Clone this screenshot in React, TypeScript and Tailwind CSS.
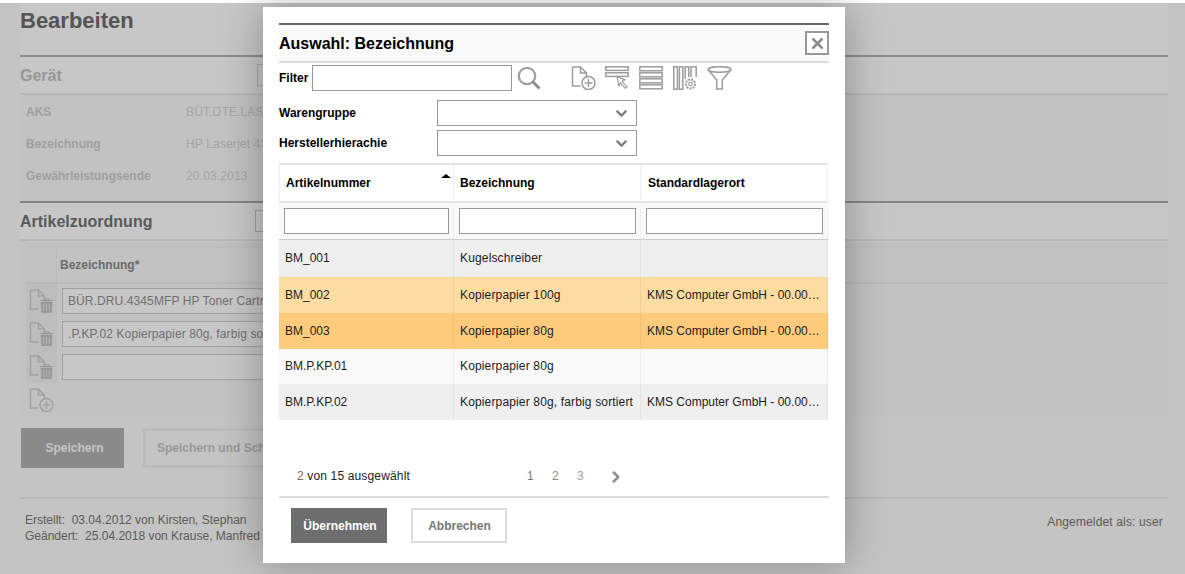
import { ChevronDown, ChevronRight, X } from 'lucide-react';

const ROWS = [
  { nr: 'BM_001', name: 'Kugelschreiber', ort: '', bg: 'bg-[#efefef]', h: 'h-[37px]' },
  { nr: 'BM_002', name: 'Kopierpapier 100g', ort: 'KMS Computer GmbH - 00.00.00.00', bg: 'bg-[#fddca2]', h: 'h-[36px]' },
  { nr: 'BM_003', name: 'Kopierpapier 80g', ort: 'KMS Computer GmbH - 00.00.00.00', bg: 'bg-[#fecb7c]', h: 'h-[36px]' },
  { nr: 'BM.P.KP.01', name: 'Kopierpapier 80g', ort: '', bg: 'bg-[#f9f9f9]', h: 'h-[35px]' },
  { nr: 'BM.P.KP.02', name: 'Kopierpapier 80g, farbig sortiert', ort: 'KMS Computer GmbH - 00.00.00.00', bg: 'bg-[#efefef]', h: 'h-[36px]' },
];

const FONT = 'font-["Liberation_Sans",Arial,sans-serif]';

function FileIcon({ color, children }: { color: string; children?: React.ReactNode }) {
  return (
    <svg width="25" height="24" viewBox="0 0 25 24" fill="none" stroke={color} strokeWidth="1.5">
      <path d="M1.5 1h8l6 6v5M1.5 1v19h8M9.5 1v6h6" />
      {children}
    </svg>
  );
}

function TrashIcon() {
  return (
    <FileIcon color="#d0d0d0">
      <path d="M11 11.5h13M15 11.5v-1.5h5v1.5" stroke="#c4c4c4" strokeWidth="1.2" />
      <path d="M12 13h11l-.7 10.5h-9.6z" fill="#c4c4c4" stroke="#c4c4c4" strokeWidth="0.8" />
      <path d="M14.7 15v7M17.5 15v7M20.3 15v7" stroke="#e8e8e8" strokeWidth="1" />
    </FileIcon>
  );
}

function AddFileIcon({ color }: { color: string }) {
  return (
    <FileIcon color={color}>
      <circle cx="17.5" cy="17" r="6.5" />
      <path d="M17.5 13v8M13.5 17h8" />
    </FileIcon>
  );
}

function SearchIcon() {
  return (
    <svg width="24" height="24" viewBox="0 0 24 24" fill="none">
      <circle cx="10" cy="10" r="8.2" stroke="#a0a0a0" strokeWidth="2.2" />
      <path d="M15.5 15.5l7 7" stroke="#8e8e8e" strokeWidth="3" />
    </svg>
  );
}

function RowSelectIcon() {
  return (
    <svg width="24" height="24" viewBox="0 0 24 24" fill="none" stroke="#9c9c9c" strokeWidth="1.5">
      <rect x="0.8" y="0.8" width="22.4" height="3.6" />
      <rect x="0.8" y="6.8" width="22.4" height="3.6" />
      <path d="M12 10.5l8 3.4-3 1.4 5 5.4-1.6 1.6-5-5.4-1.4 3z" fill="white" strokeWidth="1.2" />
    </svg>
  );
}

function RowsIcon() {
  return (
    <svg width="24" height="24" viewBox="0 0 24 24" fill="none" stroke="#9c9c9c" strokeWidth="1.5">
      <rect x="0.8" y="0.8" width="22.4" height="4" />
      <rect x="0.8" y="6.8" width="22.4" height="4" />
      <rect x="0.8" y="12.8" width="22.4" height="4" />
      <rect x="0.8" y="18.8" width="22.4" height="4" />
    </svg>
  );
}

function ColumnsIcon() {
  return (
    <svg width="24" height="24" viewBox="0 0 24 24" fill="none" stroke="#9c9c9c" strokeWidth="1.5">
      <rect x="0.8" y="0.8" width="3.6" height="22.4" />
      <rect x="6.4" y="0.8" width="3.4" height="22.4" />
      <path d="M12.2 13V0.8h3.6V11M18 11V0.8h5.2V11" />
      <circle cx="17.5" cy="18" r="4.6" strokeWidth="2" strokeDasharray="2 1.1" />
      <circle cx="17.5" cy="18" r="1.8" strokeWidth="1.2" />
    </svg>
  );
}

function FunnelIcon() {
  return (
    <svg width="25" height="24" viewBox="0 0 25 24" fill="none" stroke="#9c9c9c" strokeWidth="1.5">
      <ellipse cx="12.5" cy="3.5" rx="11.5" ry="2.8" />
      <path d="M1 3.5l8.7 10.5v9h5.6v-9L24 3.5" />
    </svg>
  );
}

function FormSelect() {
  return (
    <div className="flex h-[26px] w-[200px] items-center justify-end border border-[#999] bg-white pr-[6px]">
      <ChevronDown size={17} strokeWidth={3.2} color="#7d7d7d" />
    </div>
  );
}

function Modal() {
  return (
    <div className="h-[556px] w-[582px] bg-white px-[16px] pt-[16px] text-[12px] text-black shadow-[0_0_40px_rgba(0,0,0,0.3)]">
      <div className="flex h-[40px] items-center justify-between border-y-2 border-t-[#666] border-b-[#ddd] bg-[#f9f9f9]">
        <span className="pt-[2px] text-[16px] font-bold">Auswahl: Bezeichnung</span>
        <button className="flex h-[24px] w-[24px] items-center justify-center border-2 border-[#999] bg-white">
          <X size={17} strokeWidth={3.6} color="#8a8a8a" />
        </button>
      </div>

      <div className="mt-[2px] flex h-[26px] items-center">
        <span className="w-[33px] font-bold">Filter</span>
        <input className="h-[26px] w-[200px] border border-[#999] bg-white" />
        <div className="ml-[5px] flex items-center">
          <SearchIcon />
          <div className="ml-[30px] flex items-center gap-[10px]">
            <div className="-mr-px">
              <AddFileIcon color="#9c9c9c" />
            </div>
            <RowSelectIcon />
            <RowsIcon />
            <ColumnsIcon />
            <FunnelIcon />
          </div>
        </div>
      </div>

      <div className="mt-[9px] flex items-center">
        <span className="w-[158px] font-bold">Warengruppe</span>
        <FormSelect />
      </div>
      <div className="mt-[4px] flex items-center">
        <span className="w-[158px] font-bold">Herstellerhierachie</span>
        <FormSelect />
      </div>

      <div className="mt-[7px] w-[549px] border-t-2 border-[#e4e4e4]">
        <div className="grid h-[38px] grid-cols-[175px_187px_187px] border-b-2 border-[#e4e4e4] font-bold">
          <div className="flex border-r border-l border-[#f0f0f0] pr-[2px] pl-[6px]">
            <span className="mt-[9px] flex-1">Artikelnummer</span>
            <svg className="mt-[9px]" width="10" height="4" viewBox="0 0 10 4">
              <path d="M5 0l5 4H0z" fill="#000" />
            </svg>
          </div>
          <div className="border-r border-[#f0f0f0] pt-[9px] pl-[6px]">Bezeichnung</div>
          <div className="border-r border-[#f0f0f0] pt-[9px] pl-[7px]">Standardlagerort</div>
        </div>
        <div className="grid h-[37px] grid-cols-[175px_187px_187px] border-b border-[#ccc] bg-[#f9f9f9] pt-[5px]">
          <div className="border-r border-[#eee] pl-[5px]">
            <input className="h-[26px] w-[165px] border border-[#999] bg-white" />
          </div>
          <div className="border-r border-[#eee] pl-[5px]">
            <input className="h-[26px] w-[177px] border border-[#999] bg-white" />
          </div>
          <div className="border-r border-[#eee] pl-[5px]">
            <input className="h-[26px] w-[177px] border border-[#999] bg-white" />
          </div>
        </div>
        {ROWS.map((row) => (
          <div key={row.nr} className={`grid grid-cols-[175px_187px_187px] pb-px text-[#1c1c1c] ${row.bg} ${row.h}`}>
            <div className="flex items-center border-r border-black/5 pl-[6px]">{row.nr}</div>
            <div className="flex items-center border-r border-black/5 pl-[6px] tracking-[0.15px] whitespace-nowrap">{row.name}</div>
            <div className="flex items-center border-r border-black/5 pr-[5px] pl-[6px]">
              <span className="truncate">{row.ort}</span>
            </div>
          </div>
        ))}
      </div>

      <div className="flex h-[78px] w-[550px] items-start border-b-2 border-[#ddd] pt-[47px] pl-[18px]">
        <span className="w-[230px] tracking-[0.15px] text-[#222]">
          <span className="text-[#7b6a55]">2</span> von 15 ausgewählt
        </span>
        <span className="w-[25px] text-[#83708a]">1</span>
        <span className="w-[25px] text-[#8c8c8c]">2</span>
        <span className="w-[25px] text-[#a0a0a0]">3</span>
        <ChevronRight className="mt-px ml-[5px]" size={18} strokeWidth={3.4} color="#8f8f8f" />
      </div>

      <div className="mt-[10px] flex gap-[24px] pl-[12px] font-bold">
        <button className="h-[35px] w-[96px] bg-[#6e6e6e] pl-[2px] text-white">Übernehmen</button>
        <button className="h-[35px] w-[96px] border-2 border-[#ddd] bg-white pl-px text-[#777]">Abbrechen</button>
      </div>
    </div>
  );
}

export default function App() {
  return (
    <div className={`relative h-[574px] w-[1185px] overflow-hidden bg-white pt-[3px] ${FONT}`}>
      <div className="h-[571px] bg-[#fbfbfb] px-[20px] pr-[17px] text-[12px] text-[#767676]">
        <div className="bg-white">
          <h1 className="h-[52px] text-[22px] leading-[36px] font-bold text-[#6d6d6d]">Bearbeiten</h1>
          <div className="border-t-2 border-[#b6b6b6]" />
        </div>

        <div className="flex h-[38px] items-center border-b-2 border-[#ececec] bg-white">
          <span className="w-[237px] pt-[2px] text-[16px] font-bold text-[#c2c2c2]">Gerät</span>
          <div className="h-[22px] w-[10px] border border-[#d0d0d0]" />
        </div>

        <div className="h-[106px] bg-[#f9f9f9] pl-[6px] pt-[1px] text-[#d0d0d0]">
          {[
            ['AKS', 'BÜT.DTE.LAS.'],
            ['Bezeichnung', 'HP Laserjet 4345'],
            ['Gewährleistungsende', '20.03.2013'],
          ].map(([label, value]) => (
            <div key={label} className="flex h-[32px] items-center">
              <span className="w-[160px] font-bold text-[#cdcdcd]">{label}</span>
              <span className="tracking-[0.15px] text-[#d4d4d4]">{value}</span>
            </div>
          ))}
        </div>

        <div className="border-t-2 border-[#acacac]" />
        <div className="flex h-[38px] items-center border-b-2 border-[#ececec] bg-white">
          <span className="w-[235px] pt-[2px] text-[16px] font-bold text-[#747474]">Artikelzuordnung</span>
          <div className="h-[22px] w-[10px] border border-[#c8c8c8]" />
        </div>

        <div className="h-[176px] bg-[#f9f9f9] pt-[5px] pl-[6px]">
          <div className="flex h-[38px] border-y-2 border-t-[#f3f3f3] border-b-[#ececec]">
            <div className="w-[31px] border-r border-[#f0f0f0]" />
            <span className="pt-[8px] pl-[3px] font-bold text-[#8a8a8a]">Bezeichnung*</span>
          </div>
          {['BÜR.DRU.4345MFP HP Toner Cartridge', '.P.KP.02 Kopierpapier 80g, farbig sortiert', ''].map((text) => (
            <div key={text} className="flex h-[33px] items-center">
              <div className="flex h-[33px] w-[31px] items-center justify-center border-r border-[#f0f0f0] bg-[#f3f3f3]">
                <TrashIcon />
              </div>
              <div className="ml-[5px] flex h-[26px] w-[400px] items-center border border-[#cdcdcd] bg-white pl-[5px] tracking-[0.1px] whitespace-nowrap text-[#909090]">
                {text}
              </div>
            </div>
          ))}
          <div className="mt-[5px] flex w-[31px] justify-center">
            <AddFileIcon color="#d0d0d0" />
          </div>
        </div>

        <div className="mt-[11px] flex gap-[19px] pl-px font-bold">
          <button className="h-[40px] w-[103px] bg-[#b1b1b1] pl-[4px] text-[#fbfbfb]">Speichern</button>
          <button className="h-[40px] w-[200px] border-[3px] border-[#f0f0f0] pl-[11px] text-left whitespace-nowrap text-[#c4c4c4]">Speichern und Schließen</button>
        </div>

        <div className="mt-[29px] flex justify-between border-t-2 border-[#ececec] pt-[13px] pr-[5px] pl-[5px] leading-[16px]">
          <div>
            <div>Erstellt:&nbsp; 03.04.2012 von Kirsten, Stephan</div>
            <div>Geändert:&nbsp; 25.04.2018 von Krause, Manfred</div>
          </div>
          <div className="pt-[2px] tracking-[0.15px]">Angemeldet als: user</div>
        </div>
      </div>

      <div className="absolute inset-x-0 top-[3px] bottom-0 bg-black/[.22] pt-[4px] pl-[263px]">
        <Modal />
      </div>
    </div>
  );
}
